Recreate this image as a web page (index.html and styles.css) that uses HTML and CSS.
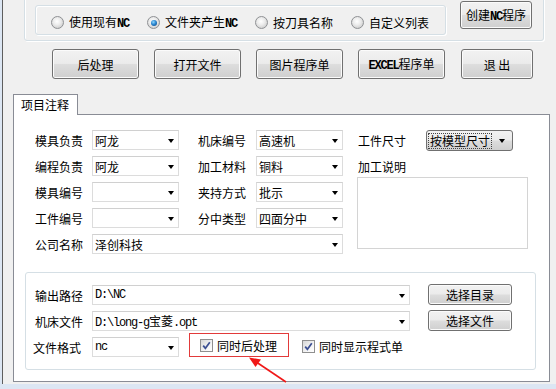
FILE: index.html
```html
<!DOCTYPE html>
<html>
<head>
<meta charset="utf-8">
<link rel="stylesheet" href="styles.css">
</head>
<body>
<div class="window">
  <div class="topbox">
    <div class="radiobox">
      <label class="ritem"><span class="radio"></span><span>使用现有<span class="lat">NC</span></span></label>
      <label class="ritem"><span class="radio on"></span><span>文件夹产生<span class="lat">NC</span></span></label>
      <label class="ritem"><span class="radio"></span><span>按刀具名称</span></label>
      <label class="ritem"><span class="radio"></span><span>自定义列表</span></label>
    </div>
    <div class="btn btn-create"><span>创建<span class="lat">NC</span>程序</span></div>
  </div>

  <div class="btnrow">
    <div class="btn btn-wide"><span>后处理</span></div>
    <div class="btn btn-wide"><span>打开文件</span></div>
    <div class="btn btn-wide"><span>图片程序单</span></div>
    <div class="btn btn-wide"><span><span class="lat">EXCEL</span>程序单</span></div>
    <div class="btn btn-exit"><span>退 出</span></div>
  </div>

  <div class="tabs"><div class="tab">项目注释</div></div>
  <div class="panel">
    <div class="form">
      <div class="formgrid">
        <div class="lbl">模具负责</div>
        <div class="combo">阿龙<i class="arr"></i></div>
        <div class="lbl lbl2">机床编号</div>
        <div class="combo">高速机<i class="arr"></i></div>

        <div class="lbl">编程负责</div>
        <div class="combo">阿龙<i class="arr"></i></div>
        <div class="lbl lbl2">加工材料</div>
        <div class="combo">铜料<i class="arr"></i></div>

        <div class="lbl">模具编号</div>
        <div class="combo"><i class="arr"></i></div>
        <div class="lbl lbl2">夹持方式</div>
        <div class="combo">批示<i class="arr"></i></div>

        <div class="lbl">工件编号</div>
        <div class="combo"><i class="arr"></i></div>
        <div class="lbl lbl2">分中类型</div>
        <div class="combo">四面分中<i class="arr"></i></div>

        <div class="lbl">公司名称</div>
        <div class="combo span3">泽创科技<i class="arr"></i></div>
      </div>
      <div class="rightcol">
        <div class="rrow">
          <div class="lbl3">工件尺寸</div>
          <div class="dropbtn"><span class="focus">按模型尺寸</span><i class="arr"></i></div>
        </div>
        <div class="rlabel">加工说明</div>
        <div class="memo"></div>
      </div>
    </div>

    <div class="outbox">
      <div class="orow">
        <div class="olbl">输出路径</div>
        <div class="combo wide mono">D:\NC<i class="arr"></i></div>
        <div class="btn btn-small"><span>选择目录</span></div>
      </div>
      <div class="orow">
        <div class="olbl">机床文件</div>
        <div class="combo wide mono"><span>D:\long-g<span class="cjk">宝菱</span>.opt</span><i class="arr"></i></div>
        <div class="btn btn-small"><span>选择文件</span></div>
      </div>
      <div class="orow">
        <div class="olbl olbl-shift">文件格式</div>
        <div class="combo mono">nc<i class="arr"></i></div>
        <div class="redbox">
          <span class="chk"><svg width="11" height="11" viewBox="0 0 11 11"><path d="M2.2 5.6 L4.4 8.3 L8.8 2.2" fill="none" stroke="#3c4f92" stroke-width="1.7"/></svg></span>
          <span>同时后处理</span>
        </div>
        <div class="chkitem">
          <span class="chk"><svg width="11" height="11" viewBox="0 0 11 11"><path d="M2.2 5.6 L4.4 8.3 L8.8 2.2" fill="none" stroke="#3c4f92" stroke-width="1.7"/></svg></span>
          <span>同时显示程式单</span>
        </div>
      </div>
    </div>
  </div>
</div>
<svg class="arrow" width="556" height="389" viewBox="0 0 556 389">
  <line x1="286" y1="382" x2="257" y2="362.5" stroke="#f01818" stroke-width="1.6"/>
  <polygon points="249,357.5 261,359.5 255.5,367" fill="#f01818"/>
</svg>
</body>
</html>
```

FILE: styles.css
```css
html, body {
  margin: 0;
  padding: 0;
}
body {
  position: relative;
  width: 556px;
  height: 389px;
  overflow: hidden;
  background: #dce6f3;
  font-family: "Noto Sans CJK SC", "Noto Sans", sans-serif;
  font-size: 12px;
  color: #000;
}
.window {
  margin-left: 2px;
  height: 384px;
  background: #f0f0f0;
  border-left: 1px solid #5e5e5e;
  overflow: hidden;
}
.lat {
  font-family: "Liberation Mono", monospace;
  font-size: 12px;
  letter-spacing: -1.2px;
  font-weight: bold;
}
.topbox {
  box-sizing: border-box;
  display: flex;
  align-items: flex-start;
  width: 520px;
  height: 47px;
  margin: -6px 0 0 21px;
  padding: 10px 0 0 10px;
  border: 1px solid #d5dfe5;
  border-radius: 3px;
  box-shadow: inset 1px 1px 0 #fff, 1px 1px 0 #fff;
}
.radiobox {
  box-sizing: border-box;
  display: flex;
  align-items: center;
  gap: 18px;
  width: 411px;
  height: 30px;
  padding: 5px 0 0 15px;
  border: 1px solid #d5dfe5;
  border-radius: 3px;
  box-shadow: inset 1px 1px 0 #fff, 1px 1px 0 #fff;
}
.ritem {
  display: flex;
  align-items: center;
  gap: 5px;
  line-height: 14px;
}
.radio {
  box-sizing: border-box;
  position: relative;
  width: 13px;
  height: 13px;
  border-radius: 50%;
  border: 1px solid #8f9194;
  background: radial-gradient(circle at 45% 40%, #ffffff 0%, #ececec 40%, #bfbfbf 100%);
}
.radio.on::after {
  content: "";
  position: absolute;
  left: 2.5px;
  top: 2.5px;
  width: 6px;
  height: 6px;
  border-radius: 50%;
  background: radial-gradient(circle at 40% 35%, #8fd8ff 0%, #2a86d0 45%, #0b3f7a 100%);
}
.btn {
  box-sizing: border-box;
  display: flex;
  align-items: center;
  justify-content: center;
  border: 1px solid #707070;
  border-radius: 3px;
  background: linear-gradient(#f2f2f2 0%, #ebebeb 48%, #dddddd 52%, #cfcfcf 100%);
  box-shadow: inset 0 0 0 1px #fbfbfb;
  white-space: nowrap;
}
.btn-create {
  width: 72px;
  height: 28px;
  margin: -4px 0 0 14px;
}
.btnrow {
  display: flex;
  gap: 15px;
  margin: 8px 0 0 49px;
}
.btn-wide {
  width: 87px;
  height: 30px;
}
.btn-exit {
  width: 72px;
  height: 30px;
  margin-left: 1px;
}
.tabs {
  display: flex;
  margin: 15px 0 0 10px;
  position: relative;
  z-index: 1;
}
.tab {
  box-sizing: border-box;
  width: 65px;
  height: 21px;
  padding: 1px 0 0 7px;
  border: 1px solid #898c95;
  border-bottom: none;
  background: #fff;
  line-height: 18px;
}
.panel {
  box-sizing: border-box;
  width: 537px;
  height: 268px;
  margin: -1px 0 0 10px;
  border: 1px solid #898c95;
  background: #fff;
}
.form {
  display: flex;
  align-items: flex-start;
  padding: 15px 0 0 21px;
}
.formgrid {
  display: grid;
  grid-template-columns: 57px 87px 77px 87px;
  grid-auto-rows: 20px;
  row-gap: 6px;
}
.lbl {
  display: flex;
  align-items: center;
}
.lbl2 {
  padding-left: 19px;
}
.combo {
  box-sizing: border-box;
  position: relative;
  display: flex;
  align-items: center;
  height: 20px;
  padding-left: 2px;
  border: 1px solid #dcdcdc;
  border-top-color: #d0d0d0;
  background: #fff;
  white-space: nowrap;
}
.span3 {
  grid-column: 2 / 5;
}
.arr {
  position: absolute;
  right: 4px;
  top: 8px;
  width: 0;
  height: 0;
  border-left: 3.5px solid transparent;
  border-right: 3.5px solid transparent;
  border-top: 4px solid #000;
}
.rightcol {
  display: flex;
  flex-direction: column;
  margin-left: 15px;
}
.rrow {
  display: flex;
  align-items: center;
  height: 21px;
}
.lbl3 {
  width: 68px;
}
.dropbtn {
  box-sizing: border-box;
  position: relative;
  display: flex;
  align-items: center;
  width: 87px;
  height: 21px;
  padding-left: 2px;
  border: 1px solid #707070;
  border-radius: 3px;
  background: linear-gradient(#f2f2f2 0%, #ebebeb 48%, #dddddd 52%, #cfcfcf 100%);
}
.dropbtn .arr {
  right: 7px;
}
.focus {
  padding: 0 1px;
  outline: 1px dotted #444;
  line-height: 14px;
}
.rlabel {
  display: flex;
  align-items: center;
  height: 20px;
  margin-top: 5px;
}
.memo {
  box-sizing: border-box;
  width: 171px;
  height: 72px;
  margin: 1px 0 0 -1px;
  border: 1px solid #d4d4d4;
  background: #fff;
}
.outbox {
  box-sizing: border-box;
  display: flex;
  flex-direction: column;
  gap: 6px;
  width: 511px;
  height: 98px;
  margin: 18px 0 0 11px;
  padding: 12px 0 0 9px;
  border: 1px solid #d5dfe5;
  border-radius: 3px;
}
.orow {
  display: flex;
  align-items: flex-start;
  height: 20px;
}
.olbl {
  width: 57px;
  height: 20px;
  display: flex;
  align-items: center;
}
.olbl-shift {
  margin-left: -2px;
  width: 59px;
}
.orow > .combo {
  width: 87px;
}
.orow > .combo.wide {
  width: 318px;
}
.mono {
  font-family: "Liberation Mono", monospace;
  font-size: 12px;
  letter-spacing: -1.2px;
}
.cjk {
  font-family: "Noto Sans CJK SC", sans-serif;
  font-size: 12px;
  letter-spacing: 0;
}
.btn-small {
  width: 84px;
  height: 21px;
  margin: -1px 0 0 18px;
}
.redbox {
  box-sizing: border-box;
  display: flex;
  align-items: center;
  gap: 4px;
  width: 100px;
  height: 24px;
  margin: -4px 0 0 10px;
  padding: 1px 0 0 10px;
  border: 1px solid #e23a3a;
}
.chkitem {
  display: flex;
  align-items: center;
  gap: 4px;
  height: 20px;
  margin: -1px 0 0 13px;
}
.chk {
  box-sizing: border-box;
  display: flex;
  align-items: center;
  justify-content: center;
  width: 13px;
  height: 13px;
  border: 1px solid #8f8f8f;
  background: linear-gradient(135deg, #d6d6d6 0%, #f4f4f4 60%, #ffffff 100%);
}
.arrow {
  position: absolute;
  left: 0;
  top: 0;
  pointer-events: none;
}
```
